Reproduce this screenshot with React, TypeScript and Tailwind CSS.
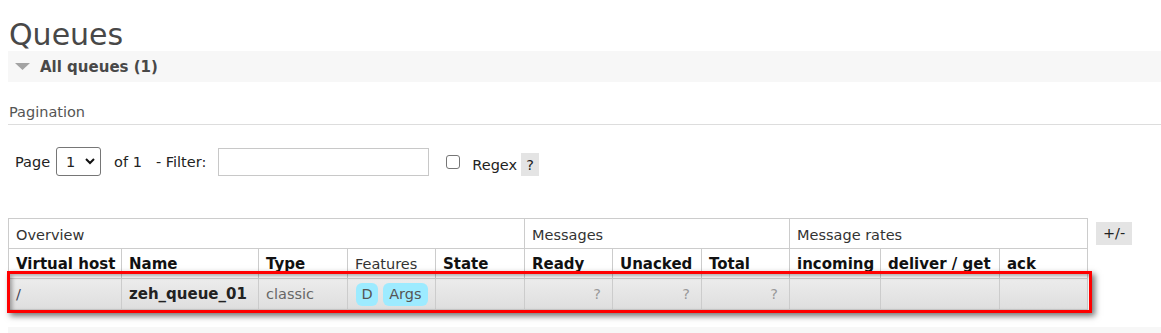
import React from "react";

const widths = [113, 137, 89, 88, 89, 88, 89, 88, 91, 119, 88];

export default function App() {
  const th2 = "border border-[#cccccc] px-[7px] h-[30px] align-middle text-left text-[15px] font-bold text-[#111] whitespace-nowrap overflow-hidden";
  const td = "border border-[#cccccc] px-[7px] h-[31px] align-middle whitespace-nowrap";
  return (
    <div className="font-['DejaVu_Sans',sans-serif] bg-white w-[1161px] h-[333px] overflow-hidden pl-2 text-[#333]">
      <h1 className="pt-[18px] pl-[1px] text-[30px] leading-[33px] text-[#484848]">Queues</h1>
      <div className="h-[31px] bg-[#f7f7f7] flex items-center">
        <svg width="15" height="7" viewBox="0 0 15 7" className="ml-[7px]">
          <polygon points="0,0 15,0 7.5,7" fill="#a3a3a3" />
        </svg>
        <span className="ml-[10px] text-[15px] font-bold text-[#484848] leading-[20px]">All queues (1)</span>
      </div>
      <div className="mt-[20px] border-b border-[#dddddd] pb-[2px] pl-[1px] text-[14.5px] leading-[20px] text-[#555]">
        Pagination
      </div>
      <div className="mt-[22px] h-[29px] flex items-center pl-[7px] text-[14.5px] leading-[20px] text-[#222]">
        <span>Page</span>
        <div className="ml-[6px] w-[45px] h-[29px] border border-[#767676] rounded-[3px] flex items-center bg-white">
          <span className="ml-[9px]">1</span>
          <svg width="10" height="7" viewBox="0 0 10 7" className="ml-[10px]">
            <polyline points="1,1 5,5 9,1" fill="none" stroke="#111" strokeWidth="2" />
          </svg>
        </div>
        <span className="ml-[13px]">of 1</span>
        <span className="ml-[14px]">- Filter:</span>
        <div className="ml-[12px] w-[211px] h-[28px] border border-[#c8c8c8] bg-white"></div>
        <div className="ml-[17px] w-[14px] h-[14px] border border-[#767676] rounded-[3px] bg-white"></div>
        <span className="ml-[12px] pt-[6px]">Regex</span>
        <div className="ml-[4px] mt-[6px] w-[18px] h-[23px] bg-[#e4e4e4] flex items-center justify-center">?</div>
      </div>
      <div className="mt-[42px] flex items-start">
        <div className="relative">
          <table className="border-collapse table-fixed w-[1079px] text-[14.5px] leading-[20px]">
            <colgroup>
              {widths.map((w, i) => (
                <col key={i} style={{ width: w }} />
              ))}
            </colgroup>
            <thead>
              <tr>
                <th colSpan={5} className="border border-[#cccccc] px-[7px] h-[30px] pt-[2px] align-middle text-left font-normal text-[#333]">Overview</th>
                <th colSpan={3} className="border border-[#cccccc] px-[7px] h-[30px] pt-[2px] align-middle text-left font-normal text-[#333]">Messages</th>
                <th colSpan={3} className="border border-[#cccccc] px-[7px] h-[30px] pt-[2px] align-middle text-left font-normal text-[#333]">Message rates</th>
              </tr>
              <tr>
                <th className={th2}>Virtual host</th>
                <th className={th2}>Name</th>
                <th className={th2}>Type</th>
                <th className="border border-[#cccccc] px-[7px] h-[30px] align-middle text-left text-[14.5px] font-normal text-[#333] whitespace-nowrap">Features</th>
                <th className={th2}>State</th>
                <th className={th2}>Ready</th>
                <th className={th2}>Unacked</th>
                <th className={th2}>Total</th>
                <th className={th2}>incoming</th>
                <th className={th2}>deliver / get</th>
                <th className={th2}>ack</th>
              </tr>
            </thead>
            <tbody>
              <tr className="bg-gradient-to-b from-[#ececec] to-[#dedede]">
                <td className={`${td} text-[#445]`}>/</td>
                <td className={`${td} text-[15px] font-bold text-[#222]`}>zeh_queue_01</td>
                <td className={`${td} text-[#666]`}>classic</td>
                <td className={`${td} pl-[8px]`}>
                  <div className="flex gap-[5px]">
                    <span className="h-[23px] px-[5.5px] rounded-[6px] bg-[#9debff] text-[#555] flex items-center">D</span>
                    <span className="h-[23px] px-[6px] rounded-[6px] bg-[#9debff] text-[#555] flex items-center">Args</span>
                  </div>
                </td>
                <td className={td}></td>
                <td className={`${td} text-right pr-[11px] text-[#999]`}>?</td>
                <td className={`${td} text-right pr-[11px] text-[#999]`}>?</td>
                <td className={`${td} text-right pr-[11px] text-[#999]`}>?</td>
                <td className={td}></td>
                <td className={td}></td>
                <td className={td}></td>
              </tr>
            </tbody>
          </table>
          <div className="absolute left-[-1px] top-[53px] w-[1085px] h-[42px] border-[3px] border-[#ff0000] shadow-[3px_3px_6px_rgba(0,0,0,0.55),inset_2px_2px_4px_rgba(0,0,0,0.35)] pointer-events-none"></div>
        </div>
        <div className="ml-[8px] mt-[4px] w-[36px] h-[23px] bg-[#e4e4e4] flex items-center justify-center text-[14.5px] text-[#222]">
          +/-
        </div>
      </div>
      <div className="mt-[17px] h-[31px] bg-[#f7f7f7]"></div>
    </div>
  );
}
